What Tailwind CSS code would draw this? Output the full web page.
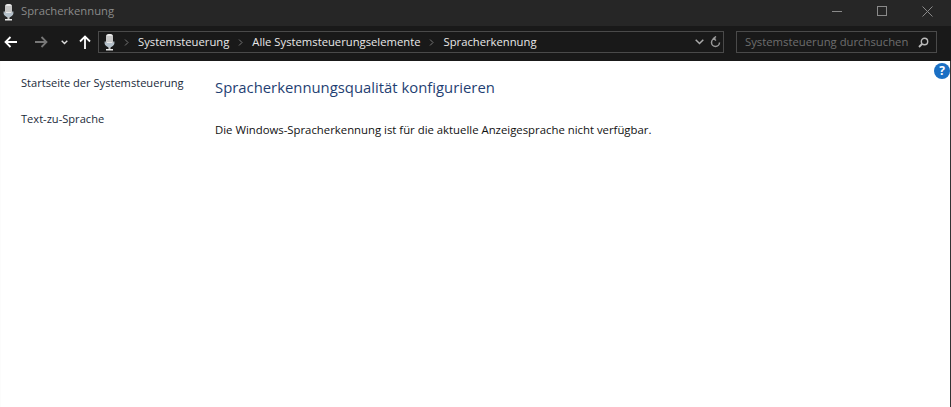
<!DOCTYPE html>
<html lang="de">
<head>
<meta charset="UTF-8" />
<title>Spracherkennung</title>
<script src="https://cdn.jsdelivr.net/npm/@tailwindcss/browser@4"></script>
</head>
<body class="w-[951px] h-[407px] overflow-hidden bg-white font-['Open_Sans',sans-serif]">
  <!-- title bar -->
  <div class="h-[26px] bg-[#262626] flex items-center pl-[3px] pr-[1px] pb-[4px]">
    <svg width="11" height="17" viewBox="0 0 11 17" class="shrink-0 mt-[3px]"><rect x="2" y="0" width="7" height="10" rx="2.500" fill="#e8e8e8"/><path d="M2 3h7M2 5h7M2 7h7" stroke="#8a8a8a" stroke-width=".7"/><path d="M.6 7.500v2c0 1.500 2.500 3.500 4.900 4.500 2.400-1 4.900-3 4.900-4.500v-2h-1.300v1.500H1.900V7.500z" fill="#b4c0ca"/><rect x="4.500" y="13" width="2" height="2" fill="#c4c4c4"/><rect x="2" y="15" width="7" height="1.500" fill="#e8e8e8"/></svg>
    <span class="ml-[7px] text-[11.25px] text-[#8a8a8a]">Spracherkennung</span>
    <div class="ml-auto flex items-center">
      <div class="w-[45px] flex justify-center"><div class="w-[10px] h-px bg-[#8a8a8a]"></div></div>
      <div class="w-[45px] flex justify-center"><div class="w-[10px] h-[10px] border border-[#8a8a8a]"></div></div>
      <div class="w-[46px] flex justify-center">
        <svg width="11" height="11" viewBox="0 0 11 11"><path d="M.5.500l10 10M10.500.500l-10 10" stroke="#8a8a8a" fill="none"/></svg>
      </div>
    </div>
  </div>

  <!-- navigation bar -->
  <div class="h-[35px] bg-[#191919] flex items-center pb-[3px]">
    <div class="w-[98px] flex items-center shrink-0">
      <svg width="14" height="12" viewBox="0 0 14 12" class="ml-[4px]"><path d="M13 6H2M6.500 1L1.500 6l5 5" stroke="#fff" stroke-width="1.800" fill="none"/></svg>
      <svg width="14" height="12" viewBox="0 0 14 12" class="ml-[16px]"><path d="M1 6h11M7.500 1l5 5-5 5" stroke="#777" stroke-width="1.800" fill="none"/></svg>
      <svg width="7" height="5" viewBox="0 0 7 5" class="ml-[13px]"><path d="M.7.700L3.500 3.500 6.300.700" stroke="#ddd" stroke-width="1.400" fill="none"/></svg>
      <svg width="12" height="14" viewBox="0 0 12 14" class="ml-[11px]"><path d="M6 14V2M1 6.500L6 1.500l5 5" stroke="#fff" stroke-width="1.800" fill="none"/></svg>
    </div>
    <div class="w-[626px] h-[22px] border border-[#4a4a4a] flex items-center pl-[5px] shrink-0">
      <svg width="11" height="17" viewBox="0 0 11 17" class="shrink-0"><rect x="2" y="0" width="7" height="10" rx="2.500" fill="#e8e8e8"/><path d="M2 3h7M2 5h7M2 7h7" stroke="#8a8a8a" stroke-width=".7"/><path d="M.6 7.500v2c0 1.500 2.500 3.500 4.900 4.500 2.400-1 4.900-3 4.900-4.500v-2h-1.300v1.500H1.900V7.500z" fill="#b4c0ca"/><rect x="4.500" y="13" width="2" height="2" fill="#c4c4c4"/><rect x="2" y="15" width="7" height="1.500" fill="#e8e8e8"/></svg>
      <svg width="5" height="7" viewBox="0 0 5 7" class="ml-[9px]"><path d="M1 .500l3 3-3 3" stroke="#777" fill="none"/></svg>
      <span class="ml-[9px] text-[11.25px] text-[#e8e8e8]">Systemsteuerung</span>
      <svg width="5" height="7" viewBox="0 0 5 7" class="ml-[9px]"><path d="M1 .500l3 3-3 3" stroke="#777" fill="none"/></svg>
      <span class="ml-[9px] text-[11.25px] text-[#e8e8e8]">Alle Systemsteuerungselemente</span>
      <svg width="5" height="7" viewBox="0 0 5 7" class="ml-[9px]"><path d="M1 .500l3 3-3 3" stroke="#777" fill="none"/></svg>
      <span class="ml-[9px] text-[11.25px] text-[#e8e8e8]">Spracherkennung</span>
      <svg width="9" height="6" viewBox="0 0 9 6" class="ml-auto"><path d="M.7.700L4.500 4.500 8.300.700" stroke="#aaa" stroke-width="1.500" fill="none"/></svg>
      <svg width="11" height="12" viewBox="0 0 11 12" class="ml-[6px] mr-[2px]"><path d="M5.500 2.500a4 4 0 1 1-4 4M5 .500l2.500 2-2.500 2" stroke="#999" stroke-width="1.500" fill="none" transform="matrix(-1 0 0 1 11 0)"/></svg>
    </div>
    <div class="ml-[12px] w-[201px] h-[22px] border border-[#4a4a4a] flex items-center pl-[8px] shrink-0">
      <span class="text-[11.3px] text-[#6e6e6e]">Systemsteuerung durchsuchen</span>
      <svg width="11" height="11" viewBox="0 0 11 11" class="ml-auto mr-[7px]"><circle cx="6.500" cy="4.500" r="3.200" stroke="#bbb" stroke-width="1.400" fill="none"/><path d="M4 7L1 10" stroke="#bbb" stroke-width="1.800"/></svg>
    </div>
  </div>

  <!-- content -->
  <div class="relative flex h-[346px] border-r border-[#333] border-l border-l-[#fcfcfc]">
    <div class="w-[214px] shrink-0 pl-[20px] pt-[13px] flex flex-col gap-[19px] text-[11.1px] leading-[17px] text-[#1a2a3a]">
      <span>Startseite der Systemsteuerung</span>
      <span>Text-zu-Sprache</span>
    </div>
    <div class="pt-[14px]">
      <h1 class="text-[14.85px] leading-[24px] text-[#1f3f73]">Spracherkennungsqualität konfigurieren</h1>
      <p class="mt-[22px] text-[11.35px] leading-[17px] text-[#111]">Die Windows-Spracherkennung ist für die aktuelle Anzeigesprache nicht verfügbar.</p>
    </div>
    <div class="absolute right-0 top-[2px] w-[16px] h-[16px] rounded-full bg-[#1a6fc4] text-white text-[12px] leading-[16px] font-bold text-center">?</div>
  </div>
</body>
</html>
